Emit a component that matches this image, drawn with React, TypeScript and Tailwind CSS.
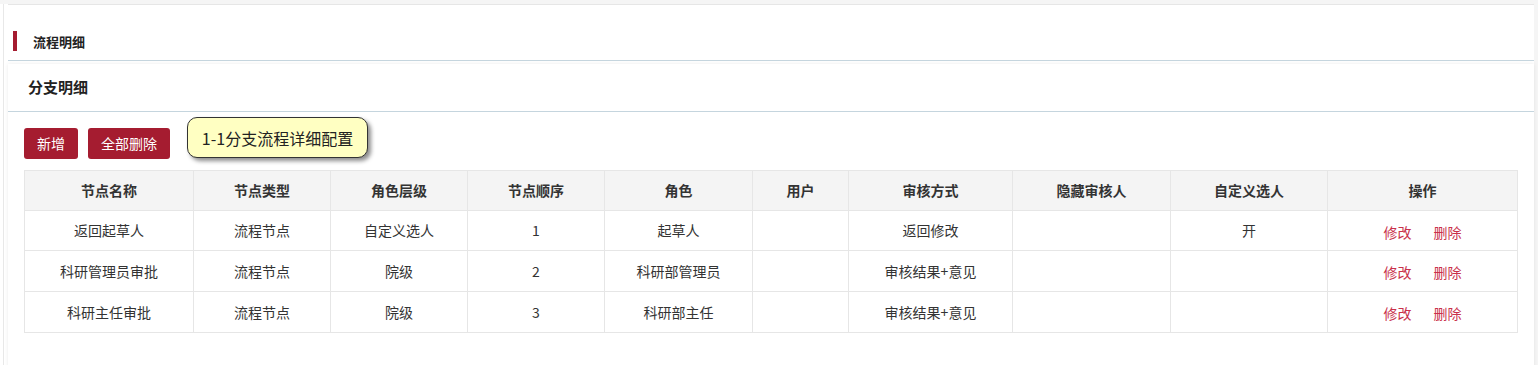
import React from 'react';

interface NodeRow {
    name: string;
    type: string;
    level: string;
    order: string;
    role: string;
    user: string;
    audit: string;
    hidden: string;
    custom: string;
}

const columns = [
    { title: '节点名称', width: 'w-[169px]' },
    { title: '节点类型', width: 'w-[137px]' },
    { title: '角色层级', width: 'w-[137px]' },
    { title: '节点顺序', width: 'w-[137px]' },
    { title: '角色', width: 'w-[148px]' },
    { title: '用户', width: 'w-[96px]' },
    { title: '审核方式', width: 'w-[164px]' },
    { title: '隐藏审核人', width: 'w-[158px]' },
    { title: '自定义选人', width: 'w-[157px]' },
    { title: '操作', width: 'w-[190px]' },
];

const rows: NodeRow[] = [
    { name: '返回起草人', type: '流程节点', level: '自定义选人', order: '1', role: '起草人', user: '', audit: '返回修改', hidden: '', custom: '开' },
    { name: '科研管理员审批', type: '流程节点', level: '院级', order: '2', role: '科研部管理员', user: '', audit: '审核结果+意见', hidden: '', custom: '' },
    { name: '科研主任审批', type: '流程节点', level: '院级', order: '3', role: '科研部主任', user: '', audit: '审核结果+意见', hidden: '', custom: '' },
];

const cell = 'border border-[#e6e6e6] text-center align-middle px-2';

const App: React.FC = () => {
    return (
        <div className="w-[1538px] h-[365px] bg-[#f5f5f5] font-['Noto_Sans_CJK_SC','Noto_Sans',sans-serif] text-[#333333] overflow-hidden">
            <div className="w-[1534px] h-full bg-white pl-[3px]">
                <div className="h-full border-l border-[#e8e8e8] pl-[4px]">
                    {/* Top panel */}
                    <div className="mt-[4px] border-t border-[#e6e6e6]">
                        <div className="h-[55px] flex items-center pt-[17px]">
                            <span className="w-[4px] h-[20px] bg-[#a51c30] ml-[5px]" />
                            <span className="ml-[16px] text-[13px] font-bold leading-none text-[#222]">流程明细</span>
                        </div>
                        <div className="border-b border-[#c5d5de]" />
                    </div>

                    {/* Branch card */}
                    <div className="mt-[3px] bg-white shadow-[0_0_4px_rgba(0,0,0,0.08)]">
                        <div className="h-[48px] flex items-center pl-[20px] border-b border-[#c5d5de]">
                            <span className="text-[15px] font-bold text-[#222]">分支明细</span>
                        </div>

                        <div className="pl-[16px] pt-[5px] pb-[60px]">
                            <div className="flex items-start h-[53px]">
                                <button className="h-[31px] w-[54px] mt-[11px] rounded-[3px] bg-[#a51c30] text-white text-[14px]">新增</button>
                                <button className="h-[31px] w-[82px] mt-[11px] ml-[10px] rounded-[3px] bg-[#a51c30] text-white text-[14px]">全部删除</button>
                                <div className="ml-[17px] h-[41px] w-[181px] rounded-[10px] border border-[#333] bg-[#ffffc2] shadow-[3px_3px_4px_rgba(0,0,0,0.45)] flex items-center justify-center text-[16px] text-[#222]">
                                    1-1分支流程详细配置
                                </div>
                            </div>

                            <table className="border-collapse text-[14px] table-fixed w-[1494px]">
                                <thead>
                                    <tr className="h-[40px] bg-[#f4f4f4]">
                                        {columns.map((c) => (
                                            <th key={c.title} className={`${cell} ${c.width} font-bold`}>{c.title}</th>
                                        ))}
                                    </tr>
                                </thead>
                                <tbody>
                                    {rows.map((r, i) => (
                                        <tr key={r.name} className={i === 0 ? 'h-[40px]' : 'h-[41px]'}>
                                            <td className={cell}>{r.name}</td>
                                            <td className={cell}>{r.type}</td>
                                            <td className={cell}>{r.level}</td>
                                            <td className={cell}>{r.order}</td>
                                            <td className={cell}>{r.role}</td>
                                            <td className={cell}>{r.user}</td>
                                            <td className={cell}>{r.audit}</td>
                                            <td className={cell}>{r.hidden}</td>
                                            <td className={cell}>{r.custom}</td>
                                            <td className={cell}>
                                                <span className="inline-flex gap-[22px] pt-[3px] text-[#c9304a]">
                                                    <a className="cursor-pointer">修改</a>
                                                    <a className="cursor-pointer">删除</a>
                                                </span>
                                            </td>
                                        </tr>
                                    ))}
                                </tbody>
                            </table>
                        </div>
                    </div>
                </div>
            </div>
        </div>
    );
};

export default App;
